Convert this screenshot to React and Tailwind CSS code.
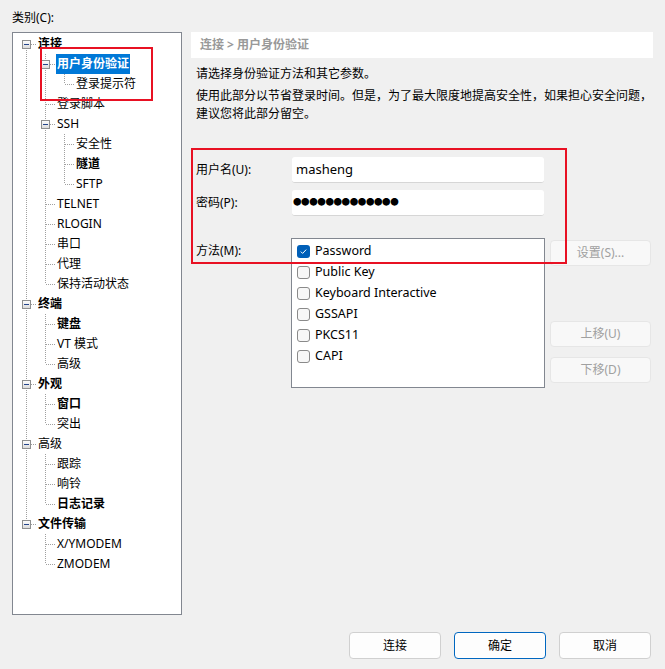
import React from 'react';

const FONT = '"Noto Sans", "Noto Sans CJK SC", sans-serif';

const treeItems = [
  { label: '连接', level: 0, bold: true, expander: true },
  { label: '用户身份验证', level: 1, bold: true, expander: true, selected: true },
  { label: '登录提示符', level: 2 },
  { label: '登录脚本', level: 1 },
  { label: 'SSH', level: 1, expander: true },
  { label: '安全性', level: 2 },
  { label: '隧道', level: 2, bold: true },
  { label: 'SFTP', level: 2 },
  { label: 'TELNET', level: 1 },
  { label: 'RLOGIN', level: 1 },
  { label: '串口', level: 1 },
  { label: '代理', level: 1 },
  { label: '保持活动状态', level: 1 },
  { label: '终端', level: 0, bold: true, expander: true },
  { label: '键盘', level: 1, bold: true },
  { label: 'VT 模式', level: 1 },
  { label: '高级', level: 1 },
  { label: '外观', level: 0, bold: true, expander: true },
  { label: '窗口', level: 1, bold: true },
  { label: '突出', level: 1 },
  { label: '高级', level: 0, expander: true },
  { label: '跟踪', level: 1 },
  { label: '响铃', level: 1 },
  { label: '日志记录', level: 1, bold: true },
  { label: '文件传输', level: 0, bold: true, expander: true },
  { label: 'X/YMODEM', level: 1 },
  { label: 'ZMODEM', level: 1 },
];

const hasNextSibling = (i) => {
  const lvl = treeItems[i].level;
  for (let j = i + 1; j < treeItems.length; j++) {
    if (treeItems[j].level < lvl) return false;
    if (treeItems[j].level === lvl) return true;
  }
  return false;
};

const ancestorAt = (i, lvl) => {
  for (let j = i - 1; j >= 0; j--) {
    if (treeItems[j].level === lvl) return j;
  }
  return -1;
};

const DOT = { stroke: '#a0a0a0', strokeWidth: 1, strokeDasharray: '1 1', shapeRendering: 'crispEdges' };

function GuideCell({ top, bottom, branch, expander }) {
  return (
    <svg width="19" height="20" className="shrink-0">
      {top && <line x1="9.5" y1="0" x2="9.5" y2="10" style={DOT} />}
      {bottom && <line x1="9.5" y1="10" x2="9.5" y2="20" style={DOT} />}
      {branch && <line x1="10" y1="10.5" x2="19" y2="10.5" style={DOT} />}
      {expander && (
        <g shapeRendering="crispEdges">
          <defs>
            <linearGradient id="exp" x1="0" y1="0" x2="0" y2="1">
              <stop offset="0" stopColor="#ffffff" />
              <stop offset="1" stopColor="#d9d9d9" />
            </linearGradient>
          </defs>
          <rect x="5.5" y="6.5" width="8" height="8" fill="url(#exp)" stroke="#8e8f8f" />
          <rect x="7" y="10" width="5" height="1" fill="#24458b" />
        </g>
      )}
    </svg>
  );
}

function TreeRow({ item, index }) {
  const cells = [];
  for (let k = 0; k < item.level; k++) {
    const a = ancestorAt(index, k);
    const cont = a >= 0 && hasNextSibling(a);
    cells.push(<GuideCell key={k} top={cont} bottom={cont} />);
  }
  cells.push(
    <GuideCell
      key="own"
      top={index !== 0}
      bottom={hasNextSibling(index)}
      branch
      expander={item.expander}
    />
  );
  return (
    <div className="flex h-[20px] items-center">
      {cells}
      <span
        className={`ml-[1px] inline-block h-[20px] px-px leading-[20px] whitespace-nowrap ${
          item.bold ? 'font-bold' : ''
        } ${item.selected ? 'bg-[#0078d7] text-white' : 'text-black'}`}
      >
        {item.label}
      </span>
    </div>
  );
}

function CheckBox({ checked }) {
  if (checked) {
    return (
      <span className="flex h-[13px] w-[13px] shrink-0 items-center justify-center rounded-[3px] bg-[#005fb8]">
        <svg width="9" height="9" viewBox="0 0 9 9">
          <path d="M1.8 4.6 L3.6 6.4 L7.2 2.6" fill="none" stroke="#ffffff" strokeWidth="1" />
        </svg>
      </span>
    );
  }
  return <span className="h-[13px] w-[13px] shrink-0 rounded-[3px] border border-[#8a8a8a] bg-[#f7f7f7]" />;
}

function SideButton({ children, className = '' }) {
  return (
    <div
      className={`flex h-[26px] w-[101px] items-center justify-center rounded-[4px] border border-[#e6e6e6] bg-[#f8f8f8] text-[#a0a0a0] ${className}`}
    >
      {children}
    </div>
  );
}

function DialogButton({ children, primary }) {
  return (
    <div
      className={`flex h-[27px] w-[92px] items-center justify-center rounded-[4px] bg-[#fdfdfd] text-black ${
        primary ? 'border border-[#0067c0] shadow-[inset_0_0_0_1px_#ffffff]' : 'border border-[#d0d0d0]'
      }`}
    >
      {children}
    </div>
  );
}

const methods = ['Password', 'Public Key', 'Keyboard Interactive', 'GSSAPI', 'PKCS11', 'CAPI'];

export default function App() {
  return (
    <div
      className="relative flex h-[669px] w-[665px] flex-col overflow-hidden bg-[#f0f0f0] text-[12px] text-black"
      style={{ fontFamily: FONT }}
    >
      <div className="flex px-[12px] pt-[10px]">
        {/* category tree */}
        <div className="w-[170px] shrink-0">
          <div className="h-[22px] leading-[16px]">类别(C):</div>
          <div className="h-[583px] border border-[#828790] bg-white pl-[4px] pt-px">
            {treeItems.map((item, i) => (
              <TreeRow key={i} item={item} index={i} />
            ))}
          </div>
        </div>

        {/* settings page */}
        <div className="ml-[9px] w-[462px] pt-[22px]">
          <div className="flex h-[26px] items-center bg-white pl-[9px] font-bold text-[#999999]">
            连接 &gt; 用户身份验证
          </div>
          <div className="pl-[5px]">
            <p className="mt-[7px] leading-[18px]">请选择身份验证方法和其它参数。</p>
            <p className="mt-[4px] leading-[18px]">
              使用此部分以节省登录时间。但是，为了最大限度地提高安全性，如果担心安全问题，
              <br />
              建议您将此部分留空。
            </p>

            <div className="mt-[34px] flex items-center">
              <span className="w-[96px]">用户名(U):</span>
              <div className="flex h-[26px] w-[252px] items-center rounded-[3px] border-b border-[#d6d6d6] bg-white pl-[4px] text-[13px]">
                masheng
              </div>
            </div>
            <div className="mt-[7px] flex items-center">
              <span className="w-[96px]">密码(P):</span>
              <div className="flex h-[26px] w-[252px] items-center rounded-[3px] border-b border-[#d6d6d6] bg-white pl-[1px] text-[8.5px] tracking-[-0.4px]">
                ●●●●●●●●●●●●●
              </div>
            </div>

            <div className="mt-[22px] flex items-start">
              <span className="w-[95px] pt-[4px] leading-[18px]">方法(M):</span>
              <div className="h-[150px] w-[254px] border border-[#828790] bg-white pt-[2px]">
                {methods.map((m, i) => (
                  <div key={m} className="flex h-[21px] items-center pl-[5px]">
                    <CheckBox checked={i === 0} />
                    <span className="ml-[5px] text-[12.5px]">{m}</span>
                  </div>
                ))}
              </div>
              <div className="ml-[5px] flex flex-col pt-[2px]">
                <SideButton>设置(S)...</SideButton>
                <SideButton className="mt-[55px]">上移(U)</SideButton>
                <SideButton className="mt-[10px]">下移(D)</SideButton>
              </div>
            </div>
          </div>
        </div>
      </div>

      <div className="mt-[17px] flex justify-end gap-[13px] pr-[14px]">
        <DialogButton>连接</DialogButton>
        <DialogButton primary>确定</DialogButton>
        <DialogButton>取消</DialogButton>
      </div>

      {/* red annotation boxes */}
      <div className="pointer-events-none absolute left-[40px] top-[47px] h-[54px] w-[113px] border-2 border-[#e81123]" />
      <div className="pointer-events-none absolute left-[191px] top-[148px] h-[116px] w-[376px] border-2 border-[#e81123]" />
    </div>
  );
}
